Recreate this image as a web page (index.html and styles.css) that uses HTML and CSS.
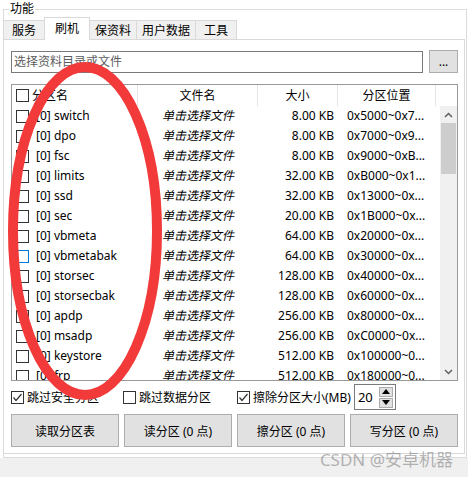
FILE: index.html
```html
<!DOCTYPE html>
<html lang="zh-CN">
<head>
    <meta charset="UTF-8">
    <title>刷机</title>
    <link rel="stylesheet" href="styles.css">
</head>
<body>
    <fieldset class="group">
        <legend>功能</legend>
        <div class="tabs">
            <div class="tab">服务</div>
            <div class="tab active">刷机</div>
            <div class="tab">保资料</div>
            <div class="tab">用户数据</div>
            <div class="tab">工具</div>
        </div>
        <div class="tab-panel">
            <div class="path-row">
                <div class="path-input">选择资料目录或文件</div>
                <button class="browse-btn">...</button>
            </div>

            <div class="part-list">
                <div class="list-head">
                    <div class="head-cell head-name"><span class="chk"></span>分区名</div>
                    <div class="head-cell">文件名</div>
                    <div class="head-cell">大小</div>
                    <div class="head-cell">分区位置</div>
                    <div class="head-cell"></div>
                </div>
                <div class="list-body">
                    <div class="rows">
                        <div class="row"><div class="cell-name"><span class="chk"></span>[0] switch</div><div class="cell-file">单击选择文件</div><div class="cell-size">8.00 KB</div><div class="cell-loc">0x5000~0x7...</div></div>
                        <div class="row"><div class="cell-name"><span class="chk"></span>[0] dpo</div><div class="cell-file">单击选择文件</div><div class="cell-size">8.00 KB</div><div class="cell-loc">0x7000~0x9...</div></div>
                        <div class="row"><div class="cell-name"><span class="chk"></span>[0] fsc</div><div class="cell-file">单击选择文件</div><div class="cell-size">8.00 KB</div><div class="cell-loc">0x9000~0xB...</div></div>
                        <div class="row"><div class="cell-name"><span class="chk"></span>[0] limits</div><div class="cell-file">单击选择文件</div><div class="cell-size">32.00 KB</div><div class="cell-loc">0xB000~0x1...</div></div>
                        <div class="row"><div class="cell-name"><span class="chk"></span>[0] ssd</div><div class="cell-file">单击选择文件</div><div class="cell-size">32.00 KB</div><div class="cell-loc">0x13000~0x...</div></div>
                        <div class="row"><div class="cell-name"><span class="chk"></span>[0] sec</div><div class="cell-file">单击选择文件</div><div class="cell-size">20.00 KB</div><div class="cell-loc">0x1B000~0x...</div></div>
                        <div class="row"><div class="cell-name"><span class="chk"></span>[0] vbmeta</div><div class="cell-file">单击选择文件</div><div class="cell-size">64.00 KB</div><div class="cell-loc">0x20000~0x...</div></div>
                        <div class="row"><div class="cell-name"><span class="chk hot"></span>[0] vbmetabak</div><div class="cell-file">单击选择文件</div><div class="cell-size">64.00 KB</div><div class="cell-loc">0x30000~0x...</div></div>
                        <div class="row"><div class="cell-name"><span class="chk"></span>[0] storsec</div><div class="cell-file">单击选择文件</div><div class="cell-size">128.00 KB</div><div class="cell-loc">0x40000~0x...</div></div>
                        <div class="row"><div class="cell-name"><span class="chk"></span>[0] storsecbak</div><div class="cell-file">单击选择文件</div><div class="cell-size">128.00 KB</div><div class="cell-loc">0x60000~0x...</div></div>
                        <div class="row"><div class="cell-name"><span class="chk"></span>[0] apdp</div><div class="cell-file">单击选择文件</div><div class="cell-size">256.00 KB</div><div class="cell-loc">0x80000~0x...</div></div>
                        <div class="row"><div class="cell-name"><span class="chk"></span>[0] msadp</div><div class="cell-file">单击选择文件</div><div class="cell-size">256.00 KB</div><div class="cell-loc">0xC0000~0x...</div></div>
                        <div class="row"><div class="cell-name"><span class="chk"></span>[0] keystore</div><div class="cell-file">单击选择文件</div><div class="cell-size">512.00 KB</div><div class="cell-loc">0x100000~0...</div></div>
                        <div class="row"><div class="cell-name"><span class="chk"></span>[0] frp</div><div class="cell-file">单击选择文件</div><div class="cell-size">512.00 KB</div><div class="cell-loc">0x180000~0...</div></div>
                    </div>
                    <div class="vscroll">
                        <div class="sb-arrow">
                            <svg width="9" height="6" viewBox="0 0 9 6"><polyline points="1,5 4.5,1.5 8,5" fill="none" stroke="#606060" stroke-width="1.5"/></svg>
                        </div>
                        <div class="sb-thumb"></div>
                        <div class="sb-arrow sb-down">
                            <svg width="9" height="6" viewBox="0 0 9 6"><polyline points="1,1 4.5,4.5 8,1" fill="none" stroke="#606060" stroke-width="1.5"/></svg>
                        </div>
                    </div>
                </div>
            </div>

            <div class="opt-row">
                <label class="opt"><span class="chk"><svg width="11" height="11" viewBox="0 0 11 11"><polyline points="1.5,5.5 4,8.5 9.5,2" fill="none" stroke="#333" stroke-width="1.2"/></svg></span>跳过安全分区</label>
                <label class="opt"><span class="chk"></span>跳过数据分区</label>
                <label class="opt"><span class="chk"><svg width="11" height="11" viewBox="0 0 11 11"><polyline points="1.5,5.5 4,8.5 9.5,2" fill="none" stroke="#333" stroke-width="1.2"/></svg></span>擦除分区大小(MB)
                    <span class="spin">
                        <span class="spin-val">20</span>
                        <span class="spin-btns">
                            <span class="spin-btn"><svg width="8" height="5" viewBox="0 0 8 5"><polygon points="0,5 4,0 8,5" fill="#000"/></svg></span>
                            <span class="spin-btn"><svg width="8" height="5" viewBox="0 0 8 5"><polygon points="0,0 8,0 4,5" fill="#000"/></svg></span>
                        </span>
                    </span>
                </label>
            </div>

            <div class="action-row">
                <button class="action-btn">读取分区表</button>
                <button class="action-btn">读分区 (0 点)</button>
                <button class="action-btn">擦分区 (0 点)</button>
                <button class="action-btn">写分区 (0 点)</button>
            </div>
        </div>
    </fieldset>
    <div class="status"></div>

    <svg class="mark" width="468" height="477" viewBox="0 0 468 477">
        <ellipse cx="85" cy="231" rx="72" ry="164" fill="none" stroke="#f23a3a" stroke-width="10"/>
    </svg>
    <div class="watermark">CSDN @安卓机器</div>
</body>
</html>
```

FILE: styles.css
```css
* {
    margin: 0;
    padding: 0;
    box-sizing: border-box;
}

body {
    width: 468px;
    height: 477px;
    background: #fff;
    font-family: "Noto Sans", "Noto Sans CJK SC", sans-serif;
    font-size: 12px;
    color: #000;
    position: relative;
    overflow: hidden;
}

.group {
    margin: 0 1px 0 3px;
    border: 1px solid #dcdcdc;
    padding: 0 0 3px 0;
    min-width: 0;
}

.group legend {
    margin-left: 5px;
    padding: 0 1px;
    line-height: 18px;
}

/* tab strip */
.tabs {
    display: flex;
    align-items: flex-end;
    height: 22px;
    margin: -1px 0 0 -1px;
    position: relative;
    z-index: 1;
}

.tab {
    height: 19px;
    min-width: 42px;
    padding: 0 5px;
    border: 1px solid #d9d9d9;
    border-bottom: 0;
    background: #f0f0f0;
    line-height: 20px;
    text-align: center;
    white-space: nowrap;
}

.tab + .tab {
    margin-left: -1px;
}

.tab.active {
    height: 23px;
    min-width: 46px;
    margin-bottom: -1px;
    background: #fff;
    line-height: 22px;
    position: relative;
    z-index: 1;
}

.tab-panel {
    width: 462px;
    height: 415px;
    margin-left: -1px;
    border: 1px solid #d9d9d9;
    background: #fff;
    padding: 10px 6px 0 7px;
}

/* path selector */
.path-row {
    display: flex;
    align-items: flex-end;
    gap: 6px;
    height: 23px;
}

.path-input {
    flex: 1;
    height: 22px;
    border: 1px solid #7a7a7a;
    padding-left: 2px;
    line-height: 20px;
    color: #5c5c5c;
}

.browse-btn {
    width: 29px;
    height: 23px;
    background: #e1e1e1;
    border: 1px solid #adadad;
    font: inherit;
    line-height: 19px;
}

/* partition list */
.part-list {
    margin-top: 11px;
    height: 297px;
    border: 1px solid #999;
    display: flex;
    flex-direction: column;
}

.list-head {
    display: grid;
    grid-template-columns: 126px 120px 80px 98px 1fr;
    height: 21px;
}

.head-cell {
    border-right: 1px solid #e5e5e5;
    line-height: 21px;
    text-align: center;
}

.head-cell:last-child {
    border-right: 0;
}

.head-name {
    display: flex;
    align-items: center;
    padding-left: 4px;
    text-align: left;
}

.head-name .chk {
    margin-right: 3px;
}

.list-body {
    flex: 1;
    display: flex;
    min-height: 0;
}

.rows {
    flex: 1;
    overflow: hidden;
}

.row {
    display: grid;
    grid-template-columns: 126px 120px 80px 98px;
    height: 20px;
    line-height: 20px;
    white-space: nowrap;
}

.cell-name {
    display: flex;
    align-items: center;
    padding-left: 4px;
}

.cell-name .chk {
    margin-right: 7px;
}

.cell-file {
    font-style: italic;
    text-align: center;
}

.cell-size {
    text-align: right;
    padding-right: 4px;
}

.cell-loc {
    padding-left: 9px;
    overflow: hidden;
}

.chk {
    width: 13px;
    height: 13px;
    flex: none;
    border: 1px solid #333;
    background: #fff;
    display: inline-flex;
    align-items: center;
    justify-content: center;
}

.chk.hot {
    border-color: #0078d7;
}

/* scrollbar */
.vscroll {
    width: 17px;
    background: #f0f0f0;
    display: flex;
    flex-direction: column;
}

.sb-arrow {
    height: 17px;
    display: flex;
    align-items: center;
    justify-content: center;
}

.sb-thumb {
    height: 51px;
    margin: 0 1px;
    background: #cdcdcd;
}

.sb-down {
    margin-top: auto;
}

/* options */
.opt-row {
    display: grid;
    grid-template-columns: 112px 114px auto;
    align-items: center;
    height: 26px;
    margin-top: 3px;
}

.opt {
    display: flex;
    align-items: center;
    white-space: nowrap;
}

.opt .chk {
    margin-right: 3px;
}

.spin {
    width: 42px;
    height: 26px;
    margin-left: 3px;
    border: 1px solid #7a7a7a;
    display: flex;
    align-items: center;
    padding-left: 3px;
}

.spin-val {
    font-size: 13px;
}

.spin-btns {
    margin-left: auto;
    margin-right: 2px;
    display: flex;
    flex-direction: column;
    gap: 1px;
}

.spin-btn {
    width: 14px;
    height: 10px;
    background: #e1e1e1;
    border: 1px solid #adadad;
    display: flex;
    align-items: center;
    justify-content: center;
}

/* action buttons */
.action-row {
    display: grid;
    grid-template-columns: repeat(4, 1fr);
    gap: 5px;
    margin-top: 4px;
}

.action-btn {
    height: 33px;
    background: #e1e1e1;
    border: 1px solid #adadad;
    font: inherit;
    color: #000;
}

.status {
    height: 19px;
    background: #f0f0f0;
}

.mark {
    position: absolute;
    top: 0;
    left: 0;
    pointer-events: none;
}

.watermark {
    position: absolute;
    top: 446px;
    right: 15px;
    font-size: 17px;
    color: rgba(110, 110, 110, 0.5);
    pointer-events: none;
}
```
